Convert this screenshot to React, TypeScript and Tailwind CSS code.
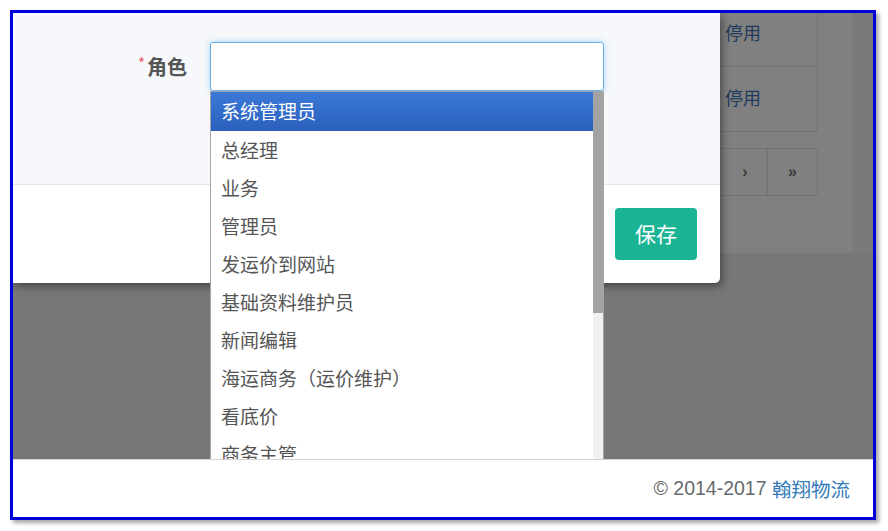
const roles = [
  '系统管理员',
  '总经理',
  '业务',
  '管理员',
  '发运价到网站',
  '基础资料维护员',
  '新闻编辑',
  '海运商务（运价维护）',
  '看底价',
  '商务主管',
];

const cjk = 'font-["Noto_Sans_CJK_SC","Noto_Sans",sans-serif]';

export default function App() {
  return (
    <div className={`h-[531px] w-[888px] bg-white pt-[10px] pl-[10px] ${cjk}`}>
      <div className="flex h-[510px] w-[866px] flex-col overflow-hidden border-[3px] border-[#0000dd] shadow-[3px_3px_4px_rgba(0,0,0,0.35)]">
        {/* page behind the modal, under the dark backdrop */}
        <div className="relative h-[446px] overflow-hidden bg-[#777777]">
          <div className="flex">
            <div className="flex h-[240px] w-[839px] flex-col items-end bg-[#808080] pr-[34px]">
              <div className="-mt-[10px] w-[300px] border border-[#737373] border-t-0">
                <div className="flex h-[64px] items-center border-b border-[#737373] pb-[4px] pl-[206px] text-[18px] text-[#1e3a5c]">
                  停用
                </div>
                <div className="flex h-[64px] items-center pb-[4px] pl-[206px] text-[18px] text-[#1e3a5c]">
                  停用
                </div>
              </div>
              <div className="mt-[16px] flex h-[48px] overflow-hidden rounded-[4px] border border-[#737373] text-[16px] font-bold text-[#3a3a3a] font-['Liberation_Sans',sans-serif]">
                <div className="flex w-[49px] items-center justify-center border-r border-[#737373]">‹</div>
                <div className="flex w-[49px] items-center justify-center border-r border-[#737373] pl-[4px]">›</div>
                <div className="flex w-[49px] items-center justify-center">»</div>
              </div>
            </div>
            <div className="h-[240px] flex-1 bg-[#7a7a7a]" />
          </div>

          {/* modal */}
          <div className="absolute left-0 top-0 w-[707px] overflow-hidden rounded-br-[5px] bg-white shadow-[2px_3px_8px_rgba(0,0,0,0.45)]">
            <div className="flex h-[172px] items-start border-b border-[#e5e5e5] bg-[#f6f8fb] pt-[29px]">
              <div className="flex h-[49px] w-[174px] items-center justify-end text-[20px] font-bold text-[#555555]">
                <span className="mr-[2px] -mt-[6px] text-[15px] font-normal text-[#ed5565]">*</span>
                角色
              </div>
              <div className="ml-[23px] h-[49px] w-[394px] rounded-[3px] border border-[#66afe9] bg-white shadow-[0_0_6px_rgba(102,175,233,0.5)]" />
            </div>
            <div className="flex h-[98px] items-center justify-end pr-[23px]">
              <button className="h-[52px] w-[82px] rounded-[4px] bg-[#1ab394] text-[21px] text-white">
                保存
              </button>
            </div>
          </div>

          {/* open select list */}
          <div className="absolute left-[197px] top-[78px] flex h-[380px] w-[394px] border border-[#a6a6a6] bg-white">
            <div className="flex-1">
              {roles.map((role, i) => (
                <div
                  key={role}
                  className={
                    i === 0
                      ? 'flex h-[39px] items-center bg-linear-to-b from-[#3b79d9] to-[#2a60bb] pl-[10px] text-[19px] text-white'
                      : 'flex h-[38px] items-center pl-[10px] text-[19px] text-[#555555]'
                  }
                >
                  {role}
                </div>
              ))}
            </div>
            <div className="w-[10px] bg-[#f1f1f1]">
              <div className="h-[221px] bg-[#a3a3a3]" />
            </div>
          </div>
        </div>

        {/* footer */}
        <footer className="flex flex-1 items-center justify-end border-t border-[#d4d4d4] bg-white pr-[23px] text-[19.5px]">
          <span className="font-['Liberation_Sans',sans-serif] text-[#676a6c]">© 2014-2017&nbsp;</span>
          <span className="text-[#337ab7]">翰翔物流</span>
        </footer>
      </div>
    </div>
  );
}
